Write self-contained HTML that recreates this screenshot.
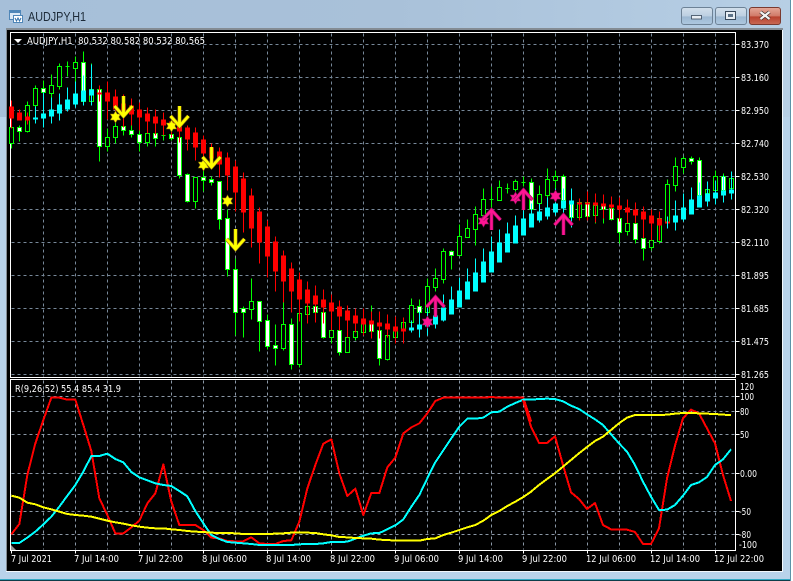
<!DOCTYPE html>
<html><head><meta charset="utf-8"><style>
html,body{margin:0;padding:0;background:#fff}
#w{position:relative;width:793px;height:581px;overflow:hidden}
svg{position:absolute;left:0;top:0;display:block}
text{font-family:"DejaVu Sans","Liberation Sans",sans-serif}
text.t{font-family:"Liberation Sans",sans-serif}
</style></head><body><div id="w">
<svg width="793" height="581" viewBox="0 0 793 581">
<defs>
<linearGradient id="g1" x1="0" y1="0" x2="1" y2="0"><stop offset="0" stop-color="#a6bfd9"/><stop offset=".5" stop-color="#a9c1d9"/><stop offset="1" stop-color="#b7cfe5"/></linearGradient>
<linearGradient id="bb" x1="0" y1="0" x2="0" y2="1"><stop offset="0" stop-color="#d3e0ec"/><stop offset=".5" stop-color="#bccfe1"/><stop offset=".55" stop-color="#9db8d2"/><stop offset="1" stop-color="#aec8e0"/></linearGradient>
<linearGradient id="bc" x1="0" y1="0" x2="0" y2="1"><stop offset="0" stop-color="#e5a99a"/><stop offset=".5" stop-color="#d07a68"/><stop offset=".55" stop-color="#b8412e"/><stop offset="1" stop-color="#c96a55"/></linearGradient>
<g id="ad"><path d="M0-21V-1M-9-11L0-1 9-11" fill="none" stroke="#8a6a10" stroke-width="4"/><path d="M0-21V-1M-9-11L0-1 9-11" fill="none" stroke="#ff0" stroke-width="2.800"/></g>
<g id="au"><path d="M0 21V1M-9 11L0 1 9 11" fill="none" stroke="#9c1060" stroke-width="3.600"/><path d="M0 21V1M-9 11L0 1 9 11" fill="none" stroke="#ff1493" stroke-width="2.400"/></g>
<path id="st" d="M0-6L1.7-3H5.2L3.4 0 5.2 3H1.7L0 6-1.7 3H-5.2L-3.4 0-5.2-3H-1.7z"/>
</defs>
<rect width="791" height="581" fill="#b9d3ea"/>
<rect width="791" height="117" fill="url(#g1)"/>
<rect x="0" y="579" width="791" height="1" fill="#35a9c4"/>
<rect x="0" y="580" width="791" height="1" fill="#0d3d4a"/>
<rect x="790" y="0" width="1" height="581" fill="#5b93a8"/>
<rect x="6" y="28" width="777" height="2" fill="#848c94"/>
<rect x="6" y="28" width="1" height="544" fill="#848c94"/>
<rect x="6" y="571" width="777" height="1" fill="#f4f8fc"/>
<rect x="782" y="30" width="1" height="542" fill="#f4f8fc"/>
<rect x="7" y="30" width="775" height="541" fill="#000"/>

<!-- title -->
<g shape-rendering="crispEdges">
<rect x="9.5" y="10.5" width="11" height="9" fill="#dbe9f6" stroke="#4f86b8"/><rect x="10" y="11" width="10" height="2" fill="#4f86b8"/>
<rect x="13.5" y="15.5" width="9" height="7" fill="#fff" stroke="#4f86b8"/>
</g>
<path d="M15 18l1.5 3 1.5-3 1.500 3 1.500-3" fill="none" stroke="#2f6ea8" stroke-width="1"/>
<text class="t" x="28" y="21" font-size="12.5" fill="#1c2a38" textLength="58" lengthAdjust="spacingAndGlyphs">AUDJPY,H1</text>

<!-- buttons -->
<rect x="681.500" y="7.500" width="31" height="17" rx="2.500" fill="url(#bb)" stroke="#6d8296"/>
<rect x="691.500" y="15.500" width="10" height="3.500" fill="#e8eef4" stroke="#38485a" stroke-width=".8"/>
<rect x="715.500" y="7.500" width="31" height="17" rx="2.500" fill="url(#bb)" stroke="#6d8296"/>
<rect x="725.500" y="11.500" width="10" height="8" fill="#e8eef4" stroke="#38485a"/><rect x="728" y="14" width="5" height="3" fill="#5d7388"/>
<rect x="749.500" y="7.500" width="31" height="17" rx="2.500" fill="url(#bc)" stroke="#7a3a30"/>
<path d="M760.500 12l9 7M769.500 12l-9 7" stroke="#38302e" stroke-width="3.600"/><path d="M760.500 12l9 7M769.500 12l-9 7" stroke="#f2f2f2" stroke-width="2.200"/>

<g shape-rendering="crispEdges" transform="translate(.5 .5)">
<!-- grid -->
<path fill="none" stroke="#778899" stroke-dasharray="3 3" d="M11 44H735M11 77H735M11 110H735M11 143H735M11 176H735M11 209H735M11 242H735M11 275H735M11 308H735M11 341H735M11 374H735M43 33V376M75 33V376M107 33V376M139 33V376M171 33V376M203 33V376M235 33V376M267 33V376M299 33V376M331 33V376M363 33V376M395 33V376M427 33V376M459 33V376M491 33V376M523 33V376M555 33V376M587 33V376M619 33V376M651 33V376M683 33V376M715 33V376"/>
<path fill="none" stroke="#8a97a6" stroke-dasharray="3 3" d="M11 396H735M11 411H735M11 434H735M11 473H735M11 511H735M11 534H735M43 380V549M75 380V549M107 380V549M139 380V549M171 380V549M203 380V549M235 380V549M267 380V549M299 380V549M331 380V549M363 380V549M395 380V549M427 380V549M459 380V549M491 380V549M523 380V549M555 380V549M587 380V549M619 380V549M651 380V549M683 380V549M715 380V549"/>
<!-- frames -->
<path fill="none" stroke="#fff" d="M10 32H735V377H10ZM10 379H735V550H10ZM735 44h4M735 77h4M735 110h4M735 143h4M735 176h4M735 209h4M735 242h4M735 275h4M735 308h4M735 341h4M735 374h4M735 396h4M735 411h4M735 434h4M735 473h4M735 511h4M735 534h4M11 550v3M75 550v3M139 550v3M203 550v3M267 550v3M331 550v3M395 550v3M459 550v3M523 550v3M587 550v3M651 550v3M715 550v3"/>

<!-- real candles: wicks -->
<path fill="none" stroke="#0f0" d="M11 105V148M19 125V141M27 101V132M35 85V115M43 80V92M51 74V97M59 63V89M67 61V76M75 56V93M83 51V104M91 63V105M99 85V161M107 128V151M115 122V143M123 120V135M131 125V137M139 130V151M147 128V146M155 129V146M163 130V140M171 128V140M179 137V178M187 173V202M195 177V208M203 168V191M211 176V185M219 181V229M227 209V276M235 258V335M243 306V337M251 278V319M259 301V351M267 314V349M275 324V365M283 302V350M291 318V369M299 313V367M307 306V323M315 300V314M323 305V338M331 325V343M339 325V355M347 333V352M355 328V340M363 318V335M371 305V335M379 320V365M387 330V360M395 325V343M403 317V335M411 298V332M419 299V316M427 278V315M435 268V291M443 248V283M451 250V269M459 224V255M467 219V237M475 206V245M483 188V225M491 186V212M499 180V200M507 183V193M515 179V191M523 176V186M531 178V209M539 185V205M547 168V201M555 170V190M563 174V205M571 188V227M579 198V220M587 191V220M595 193V223M603 194V223M611 196V220M619 197V243M627 215V235M635 215V243M643 231V260M651 234V250M659 211V243M667 179V227M675 157V191M683 156V173M691 156V164M699 157V200M707 187V200M715 170V200M723 173V200M731 171V198M65 66H69M161 135H165M489 199H493M505 188H509M521 182H525"/>
<!-- black bodies -->
<path fill="#000" stroke="#0f0" d="M9 127H13V143H9zM25 105H29V131H25zM33 88H37V105H33zM49 85H53V93H49zM57 66H61V86H57zM73 62H77V68H73zM89 89H93V101H89zM105 137H109V146H105zM113 126H117V137H113zM145 133H149V142H145zM193 177H197V201H193zM249 301H253V309H249zM281 324H285V348H281zM297 313H301V364H297zM305 306H309V314H305zM329 330H333V337H329zM345 337H349V352H345zM353 331H357V337H353zM361 323H365V332H361zM385 335H389V359H385zM393 330H397V337H393zM401 322H405V330H401zM409 305H413V322H409zM425 286H429V312H425zM433 278H437V287H433zM441 251H445V279H441zM457 236H461V255H457zM465 228H469V237H465zM473 214H477V229H473zM481 199H485V215H481zM497 187H501V200H497zM513 181H517V189H513zM537 194H541V203H537zM545 179H549V195H545zM553 176H557V180H553zM577 202H581V217H577zM593 205H597V215H593zM625 223H629V231H625zM649 240H653V247H649zM657 218H661V241H657zM665 184H669V222H665zM673 166H677V185H673zM681 158H685V167H681zM705 189H709V193H705zM713 176H717V190H713zM729 178H733V188H729z"/>
<!-- white bodies -->
<path fill="#fff" stroke="#0f0" d="M17 127H21V131H17zM41 88H45V92H41zM81 62H85V101H81zM97 89H101V146H97zM121 126H125V130H121zM129 130H133V134H129zM137 134H141V142H137zM153 133H157V138H153zM169 134H173V138H169zM177 137H181V175H177zM185 174H189V201H185zM201 177H205V180H201zM209 179H213V182H209zM217 181H221V219H217zM225 218H229V269H225zM233 269H237V312H233zM241 308H245V312H241zM257 301H261V321H257zM265 320H269V346H265zM273 345H277V348H273zM289 324H293V364H289zM313 306H317V312H313zM321 312H325V337H321zM337 330H341V352H337zM369 323H373V331H369zM377 330H381V358H377zM417 306H421V312H417zM449 251H453V255H449zM529 182H533V209H529zM561 176H565V200H561zM569 202H573V217H569zM585 202H589V216H585zM601 205H605V209H601zM609 208H613V219H609zM617 218H621V232H617zM633 223H637V239H633zM641 238H645V248H641zM689 158H693V161H689zM697 160H701V195H697zM721 176H725V190H721z"/>
<!-- HA red -->
<path fill="none" stroke="#f00" d="M11 100V128M19 109V120M27 112V124M99 85V101M107 81V119M115 89V120M123 94V127M131 98V125M139 102V130M147 107V133M155 109V135M163 112V135M171 115V137M179 118V142M187 125V150M195 127V160M203 135V169M211 143V168M219 147V177M227 152V190M235 160V211M243 172V232M251 188V247M259 207V263M267 220V277M275 236V291M283 250V302M291 262V312M299 272V321M307 281V323M315 285V322M323 289V323M331 294V330M339 300V330M347 305V337M355 308V332M363 308V335M371 311V338M379 311V338M387 314V337M395 316V343M403 317V343M579 198V220M587 191V220M595 193V222M603 194V218M611 196V218M619 197V221M627 199V223M635 202V223M643 206V238M651 209V240M659 211V240"/>
<path fill="none" stroke="#f00" stroke-width="5" d="M11 106V118M19 112V120M27 116V120M99 92V94M107 92V101M115 96V109M123 103V115M131 105V114M139 109V117M147 113V121M155 116V123M163 119V125M171 121V127M179 125V131M187 127V139M195 132V147M203 139V153M211 147V158M219 151V164M227 157V175M235 166V192M243 178V212M251 195V228M259 211V242M267 226V256M275 241V271M283 255V281M291 268V291M299 279V299M307 289V303M315 295V304M323 299V307M331 302V311M339 306V316M347 310V320M355 315V323M363 318V324M371 320V324M379 322V326M387 323V329M395 326V331M403 328V331M579 202V204M587 202V204M595 202V205M603 203V206M611 204V207M619 205V209M627 207V212M635 209V215M643 211V219M651 215V223M659 218V225M667 221V223"/>
<!-- HA cyan -->
<path fill="none" stroke="#0ff" d="M35 106V123M43 92V127M51 97V123M59 93V120M67 87V111M75 81V107M83 75V105M91 64V105M411 320V332M419 310V337M427 305V335M435 295V328M443 294V321M451 286V314M459 277V307M467 268V299M475 258V291M483 248V282M491 236V272M499 229V262M507 222V252M515 215V243M523 210V235M531 203V227M539 203V222M547 197V219M555 188V215M563 188V213M571 188V227M667 216V228M675 200V230M683 193V221M691 187V214M699 182V207M707 181V206M715 180V204M723 175V202M731 171V199"/>
<path fill="none" stroke="#0ff" stroke-width="5" d="M35 117V119M43 113V118M51 109V116M59 104V113M67 99V109M75 93V104M83 90V101M91 89V95M411 327V330M419 324V329M427 319V326M435 315V324M443 307V320M451 299V314M459 290V307M467 281V299M475 272V291M483 261V282M491 251V272M499 242V262M507 233V252M515 225V243M523 218V235M531 213V227M539 211V220M547 207V216M555 203V212M563 200V208M571 200V204M675 215V222M683 207V219M691 199V214M699 195V207M707 193V201M715 192V198M723 190V195M731 189V193"/>
</g>

<!-- markers -->
<g fill="#ff0" stroke="#8a6a10" stroke-width=".6">
<use href="#st" x="115.500" y="117"/><use href="#st" x="171.500" y="126"/><use href="#st" x="203.500" y="165"/><use href="#st" x="227.500" y="201"/>
</g>
<g fill="#ff1493" stroke="#9c1060" stroke-width=".6">
<use href="#st" x="427.500" y="322"/><use href="#st" x="483.500" y="221"/><use href="#st" x="515.500" y="198"/><use href="#st" x="555.500" y="196"/>
</g>
<use href="#ad" x="123.500" y="117"/><use href="#ad" x="179.500" y="127"/><use href="#ad" x="211.500" y="168"/><use href="#ad" x="235.500" y="250"/>
<use href="#au" x="435.500" y="296"/><use href="#au" x="491.500" y="209"/><use href="#au" x="523.500" y="189"/><use href="#au" x="563.500" y="214"/>

<!-- indicator lines -->
<g fill="none" stroke-width="6" shape-rendering="crispEdges" stroke-linejoin="round">
<g transform="translate(0 375) scale(.33333)">
<polyline stroke="#f00" points="34,478 58,447 82,300 106,205 130,135 154,68 178,68 202,74 226,74 250,150 274,228 298,370 322,420 346,475 370,475 394,457 418,437 442,385 466,355 490,268 514,380 538,450 562,450 586,450 610,465 634,488 658,490 682,498 706,499 730,499 754,487 778,505 802,507"/>
<polyline stroke="#0ff" points="34,504 58,504 82,488 106,470 130,448 154,425 178,395 202,362 226,330 250,290 274,243 298,243 322,236 346,252 370,262 394,291 418,307 442,316 466,325 490,330 514,333 538,348 562,364 586,408 610,445 634,480 658,492 682,501 706,503 730,505 754,507 778,510 802,510"/>
<polyline stroke="#ff0" points="34,362 58,368 82,383 106,388 130,397 154,403 178,410 202,417 226,420 250,422 274,425 298,431 322,437 346,442 370,446 394,451 418,455 442,458 466,460 490,460 514,463 538,465 562,468 586,470 610,471 634,473 658,474 682,474 706,475 730,477 754,477 778,477 802,477"/>
</g>
<g transform="translate(260 375) scale(.33333)">
<polyline stroke="#f00" points="22,507 46,507 70,498 94,496 118,440 142,340 166,270 190,206 214,193 238,295 262,363 286,341 310,420 334,354 358,354 382,277 406,248 430,175 454,157 478,145 502,115 526,78 550,68 574,68 598,68 622,68 646,68 670,68 694,66 718,68 742,68 766,68 790,68 814,140"/>
<polyline stroke="#0ff" points="22,510 46,510 70,510 94,510 118,508 142,507 166,507 190,505 214,501 238,501 262,500 286,491 310,482 334,475 358,474 382,463 406,451 430,433 454,395 478,360 502,310 526,262 550,226 574,190 598,155 622,131 646,131 670,128 694,112 718,110 742,95 766,84 790,74 814,74"/>
<polyline stroke="#ff0" points="22,477 46,476 70,475 94,473 118,473 142,473 166,474 190,478 214,481 238,486 262,487 286,489 310,490 334,491 358,494 382,495 406,497 430,497 454,497 478,497 502,492 526,490 550,480 574,473 598,465 622,457 646,450 670,437 694,420 718,408 742,393 766,380 790,366 814,350"/>
</g>
<g transform="translate(523 375) scale(.33333)">
<polyline stroke="#f00" points="0,75 24,155 48,204 72,204 96,184 120,270 144,352 168,372 192,402 216,384 240,450 264,463 288,464 312,464 336,471 360,507 384,507 408,460 432,310 456,212 480,130 504,104 528,115 552,160 576,205 600,300 624,378"/>
<polyline stroke="#0ff" points="0,74 24,74 48,72 72,71 96,72 120,79 144,92 168,102 192,118 216,133 240,150 264,178 288,205 312,230 336,270 360,320 384,365 408,405 432,404 456,390 480,362 504,330 528,322 552,306 576,270 600,253 624,223"/>
<polyline stroke="#ff0" points="0,367 24,350 48,330 72,312 96,295 120,275 144,255 168,235 192,216 216,198 240,185 264,165 288,145 312,128 336,120 360,120 384,120 408,120 432,119 456,116 480,114 504,114 528,115 552,116 576,117 600,119 624,120"/>
</g>
</g>
<path d="M11 545l5 5h-5z" fill="#999"/>
<path d="M14 39h8l-4 4z" fill="#fff"/>

<!-- text -->
<g fill="#fff" font-size="9.5">
<text x="27" y="44" textLength="178" lengthAdjust="spacingAndGlyphs" xml:space="preserve">AUDJPY,H1  80.532 80.582 80.532 80.565</text>
<text x="15" y="392" textLength="106" lengthAdjust="spacingAndGlyphs">R(9,26,52) 55.4 85.4 31.9</text>
<text x="741" y="48" textLength="28" lengthAdjust="spacingAndGlyphs">83.370</text>
<text x="741" y="81" textLength="28" lengthAdjust="spacingAndGlyphs">83.160</text>
<text x="741" y="114" textLength="28" lengthAdjust="spacingAndGlyphs">82.950</text>
<text x="741" y="147" textLength="28" lengthAdjust="spacingAndGlyphs">82.740</text>
<text x="741" y="180" textLength="28" lengthAdjust="spacingAndGlyphs">82.530</text>
<text x="741" y="213" textLength="28" lengthAdjust="spacingAndGlyphs">82.320</text>
<text x="741" y="246" textLength="28" lengthAdjust="spacingAndGlyphs">82.110</text>
<text x="741" y="279" textLength="28" lengthAdjust="spacingAndGlyphs">81.895</text>
<text x="741" y="312" textLength="28" lengthAdjust="spacingAndGlyphs">81.685</text>
<text x="741" y="345" textLength="28" lengthAdjust="spacingAndGlyphs">81.475</text>
<text x="741" y="378" textLength="28" lengthAdjust="spacingAndGlyphs">81.265</text>
<text x="740" y="390" textLength="14" lengthAdjust="spacingAndGlyphs">120</text>
<text x="740" y="400" textLength="14" lengthAdjust="spacingAndGlyphs">100</text>
<text x="740" y="415" textLength="9" lengthAdjust="spacingAndGlyphs">80</text>
<text x="740" y="438" textLength="9" lengthAdjust="spacingAndGlyphs">50</text>
<text x="740" y="477" textLength="17" lengthAdjust="spacingAndGlyphs">0.00</text>
<text x="739" y="515" textLength="12" lengthAdjust="spacingAndGlyphs">-50</text>
<text x="739" y="538" textLength="12" lengthAdjust="spacingAndGlyphs">-80</text>
<text x="739" y="548" textLength="18" lengthAdjust="spacingAndGlyphs">-100</text>
<text x="11" y="562" textLength="41" lengthAdjust="spacingAndGlyphs">7 Jul 2021</text>
<text x="74" y="562" textLength="45" lengthAdjust="spacingAndGlyphs">7 Jul 14:00</text>
<text x="138" y="562" textLength="45" lengthAdjust="spacingAndGlyphs">7 Jul 22:00</text>
<text x="202" y="562" textLength="45" lengthAdjust="spacingAndGlyphs">8 Jul 06:00</text>
<text x="266" y="562" textLength="45" lengthAdjust="spacingAndGlyphs">8 Jul 14:00</text>
<text x="330" y="562" textLength="45" lengthAdjust="spacingAndGlyphs">8 Jul 22:00</text>
<text x="394" y="562" textLength="45" lengthAdjust="spacingAndGlyphs">9 Jul 06:00</text>
<text x="458" y="562" textLength="45" lengthAdjust="spacingAndGlyphs">9 Jul 14:00</text>
<text x="522" y="562" textLength="45" lengthAdjust="spacingAndGlyphs">9 Jul 22:00</text>
<text x="586" y="562" textLength="50" lengthAdjust="spacingAndGlyphs">12 Jul 06:00</text>
<text x="650" y="562" textLength="50" lengthAdjust="spacingAndGlyphs">12 Jul 14:00</text>
<text x="714" y="562" textLength="50" lengthAdjust="spacingAndGlyphs">12 Jul 22:00</text>
</g>
</svg>
</div></body></html>
